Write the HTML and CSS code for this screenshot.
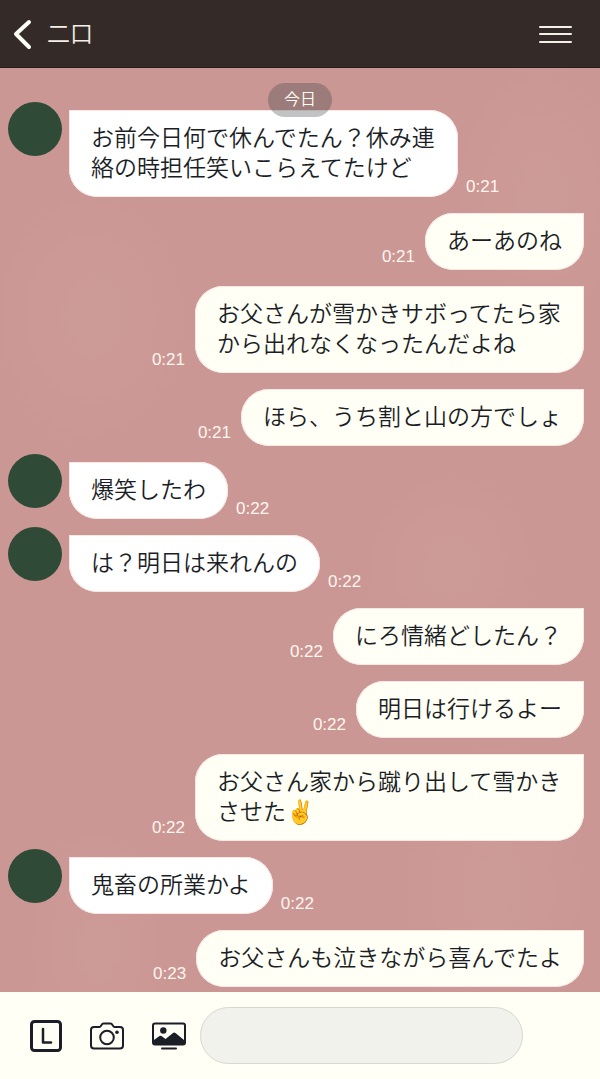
FILE: index.html
```html
<!DOCTYPE html>
<html lang="ja">
	<head>
		<meta charset="utf-8">
		<meta name="viewport" content="width=device-width">
		<title>二口</title>
		<link rel="stylesheet" href="styles.css">
	</head>
	<body>
		<header class="topbar">
			<button class="icon-button" type="button" aria-label="戻る">
				<svg width="20" height="32" viewBox="0 0 20 32" fill="none" stroke="#fffff5" stroke-width="4" stroke-linecap="round" stroke-linejoin="round">
					<path d="M16 4L3 16L16 29"/>
				</svg>
			</button>
			<h1 class="title">二口</h1>
			<button class="icon-button" type="button" aria-label="メニュー">
				<svg width="33" height="20" viewBox="0 0 33 20" fill="none" stroke="#f4f0e8" stroke-width="2" stroke-linecap="round">
					<path d="M1 3H32M1 10H32M1 18H32"/>
				</svg>
			</button>
		</header>

		<main class="chat">
			<div class="day">今日</div>

			<div class="message">
				<span class="avatar"></span>
				<p class="bubble">お前今日何で休んでたん？休み連絡の時担任笑いこらえてたけど</p>
				<time class="time">0:21</time>
			</div>
			<div class="message mine">
				<p class="bubble">あーあのね</p>
				<time class="time">0:21</time>
			</div>
			<div class="message mine">
				<p class="bubble">お父さんが雪かきサボってたら家から出れなくなったんだよね</p>
				<time class="time">0:21</time>
			</div>
			<div class="message mine">
				<p class="bubble">ほら、うち割と山の方でしょ</p>
				<time class="time">0:21</time>
			</div>
			<div class="message">
				<span class="avatar"></span>
				<p class="bubble">爆笑したわ</p>
				<time class="time">0:22</time>
			</div>
			<div class="message">
				<span class="avatar"></span>
				<p class="bubble">は？明日は来れんの</p>
				<time class="time">0:22</time>
			</div>
			<div class="message mine">
				<p class="bubble">にろ情緒どしたん？</p>
				<time class="time">0:22</time>
			</div>
			<div class="message mine">
				<p class="bubble">明日は行けるよー</p>
				<time class="time">0:22</time>
			</div>
			<div class="message mine">
				<p class="bubble">お父さん家から蹴り出して雪かきさせた✌️</p>
				<time class="time">0:22</time>
			</div>
			<div class="message">
				<span class="avatar"></span>
				<p class="bubble">鬼畜の所業かよ</p>
				<time class="time">0:22</time>
			</div>
			<div class="message mine">
				<p class="bubble">お父さんも泣きながら喜んでたよ</p>
				<time class="time">0:23</time>
			</div>
		</main>

		<form class="composer">
			<button class="icon-button" type="button" aria-label="L">
				<svg width="32" height="32" viewBox="0 0 32 32" fill="none" stroke="#1b1e26" stroke-width="3" stroke-linejoin="round">
					<rect x="1.5" y="1.5" width="29" height="29" rx="3"/>
					<path d="M13 9V22.5H21" stroke-width="2.5" stroke-linecap="round"/>
				</svg>
			</button>
			<button class="icon-button" type="button" aria-label="カメラ">
				<svg width="34" height="28" viewBox="0 0 34 28" fill="none" stroke="#1b1e26" stroke-width="2" stroke-linejoin="round">
					<path d="M4 5H9.5C11 5 11.5 1.5 13.5 1.5H20.5C22.5 1.5 23 5 24.5 5H30Q33 5 33 8V23.500Q33 26.5 30 26.5H4Q1 26.5 1 23.5V8Q1 5 4 5Z"/>
					<circle cx="17" cy="15.5" r="6.8"/>
					<circle cx="27" cy="10.2" r="1.8" fill="#1b1e26" stroke="none"/>
				</svg>
			</button>
			<button class="icon-button" type="button" aria-label="写真">
				<svg width="34" height="28" viewBox="0 0 34 28" fill="none" stroke="#1b1e26" stroke-width="2">
					<rect x="1" y="1.5" width="32" height="21" rx="2"/>
					<circle cx="11.3" cy="8.5" r="3.2" fill="#1b1e26" stroke="none"/>
					<path d="M2 18L7.500 14Q8.500 13.300 9.500 14L13.5 17L21 11Q22.300 10 23.500 11L32 18V22H2Z" fill="#1b1e26" stroke="none"/>
					<path d="M10 26.5H24" stroke-linecap="round"/>
				</svg>
			</button>
			<input class="composer-input" type="text" aria-label="メッセージ">
		</form>
	</body>
</html>
```

FILE: styles.css
```css
* {
	box-sizing: border-box;
}

body {
	margin: 0;
	min-height: 100vh;
	display: flex;
	flex-direction: column;
	background-color: #fffff5;
	color: #1b1e26;
	font-family: "Liberation Sans", "Noto Sans CJK JP", sans-serif;
}

.icon-button {
	display: flex;
	padding: 0;
	border: none;
	background: none;
	cursor: pointer;
}

/* header */

.topbar {
	display: flex;
	align-items: center;
	gap: 14px;
	height: 68px;
	padding: 0 28px 0 13px;
	background-color: #342b29;
	border-bottom: 1px solid #2a1c1b;
}

.title {
	flex: 1;
	margin: 0;
	color: #f4efe6;
	font-size: 23px;
	font-weight: 350;
	line-height: 32px;
}

/* conversation */

.chat {
	flex: 1;
	display: flex;
	flex-direction: column;
	gap: 16px;
	padding: 15px 16px 5px 8px;
	background-color: #cb9794;
	background-image:
		radial-gradient(ellipse at 15% 27%, #cd9b97 0, transparent 14%),
		radial-gradient(ellipse at 90% 14%, #cd9b97 0, transparent 12%),
		radial-gradient(ellipse at 75% 54%, #cd9b97 0, transparent 14%),
		radial-gradient(ellipse at 82% 89%, #cd9b97 0, transparent 14%),
		radial-gradient(ellipse at 16% 95%, #cd9b97 0, transparent 10%);
}

/* the day label hangs over the first bubble */
.day {
	position: relative;
	z-index: 1;
	align-self: center;
	margin: 0 -8px -23px 0;
	padding: 0 16px;
	border-radius: 17px;
	background-color: rgba(60, 65, 70, 0.32);
	color: #fffff5;
	font-size: 16px;
	font-weight: 350;
	line-height: 34px;
}

.message {
	display: flex;
	align-items: flex-end;
	gap: 8px;
}

.mine {
	flex-direction: row-reverse;
	gap: 10px;
}

.avatar {
	flex: none;
	align-self: flex-start;
	width: 54px;
	height: 54px;
	margin-top: -8px;
	border-radius: 50%;
	background-color: #2f4b37;
}

.bubble {
	max-width: 389px;
	margin: 0;
	padding: 13px 22px 14px;
	border-radius: 0 28px 28px 28px;
	background-color: #fff;
	box-shadow: inset 0 0 0 1px #f3e8e4;
	font-size: 23px;
	font-weight: 350;
	line-height: 30px;
}

.mine .bubble {
	border-radius: 28px 0 28px 28px;
	background-color: #fffff5;
}

.message .avatar + .bubble {
	margin-left: -1px;
}

.time {
	color: #fff6ee;
	font-size: 17px;
	line-height: 20px;
}

.mine .time {
	margin-bottom: 3px;
}

/* input bar */

.composer {
	display: flex;
	align-items: center;
	gap: 28px;
	padding: 15px 77px 15px 30px;
	background-color: #fffff5;
}

.composer-input {
	flex: 1;
	min-width: 0;
	height: 57px;
	margin-left: -14px;
	padding: 0 24px;
	border: 1px solid #d8d8d2;
	border-radius: 29px;
	background-color: #f2f2ec;
	color: inherit;
	font-family: inherit;
	font-size: 23px;
}
```
